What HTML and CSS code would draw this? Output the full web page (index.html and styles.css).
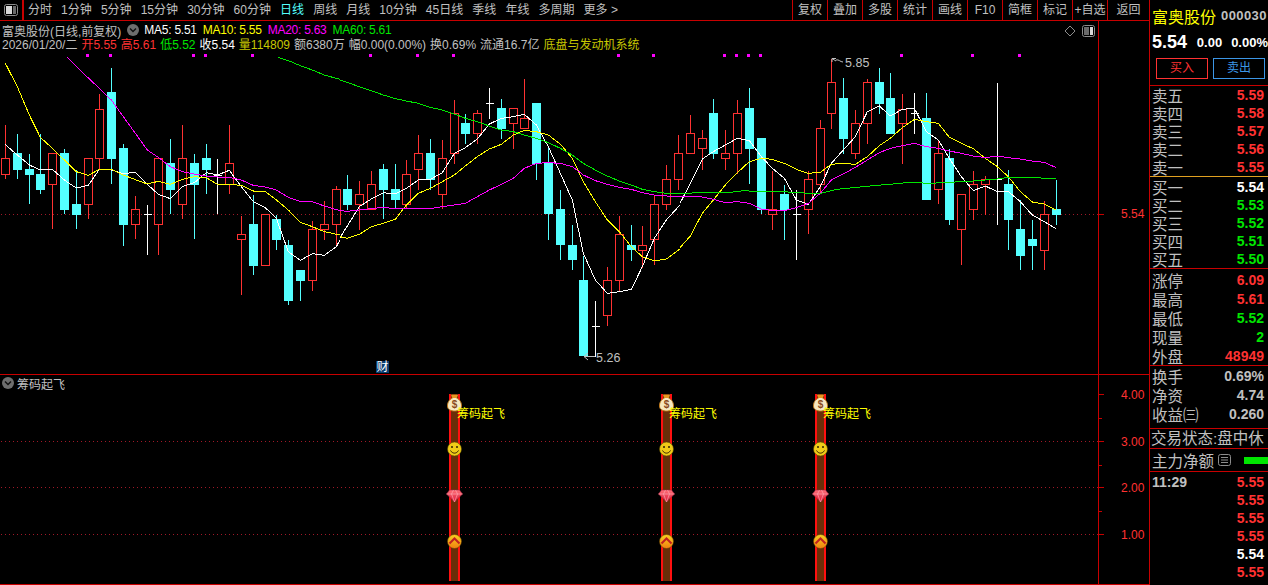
FILE: index.html
```html
<!DOCTYPE html>
<html lang="zh">
<head>
<meta charset="utf-8">
<title>富奥股份</title>
<link rel="stylesheet" href="styles.css">
</head>
<body>
<div class="app">
  <div class="left">
    <header class="toolbar">
      <div class="tb-logo">
        <svg width="16" height="14" viewBox="0 0 16 14"><rect x="1.500" y="1.500" width="13" height="11" rx="2" class="ic-line"/><rect x="3" y="3" width="6" height="8" class="ic-fill"/><rect x="10" y="3" width="3" height="8" class="ic-fill2"/></svg>
      </div>
      <nav class="periods">
        <span>分时</span><span>1分钟</span><span>5分钟</span><span>15分钟</span><span>30分钟</span><span>60分钟</span><span class="on">日线</span><span>周线</span><span>月线</span><span>10分钟</span><span>45日线</span><span>季线</span><span>年线</span><span>多周期</span><span>更多 &gt;</span>
      </nav>
      <nav class="tools">
        <span>复权</span><span>叠加</span><span>多股</span><span>统计</span><span>画线</span><span>F10</span><span>简框</span><span>标记</span><span>+自选</span><span>返回</span>
      </nav>
    </header>

    <section class="pane pane-main">
      <div class="plot">
        <svg class="canvas" width="1098" height="353" viewBox="0 21 1098 353">
          <line x1="1" y1="214.500" x2="1098" y2="214.500" class="dots"/>
          <path class="squares" d="M86 54h3v3h-3zM109 54h3v3h-3zM192 54h3v3h-3zM204 54h3v3h-3zM251 54h3v3h-3zM369 54h3v3h-3zM416 54h3v3h-3zM452 54h3v3h-3zM617 54h3v3h-3zM652 54h3v3h-3zM723 54h3v3h-3zM735 54h3v3h-3zM747 54h3v3h-3zM759 54h3v3h-3zM900 54h3v3h-3zM971 54h3v3h-3zM1018 54h3v3h-3z"/>
          <g transform="translate(0 .5)">
            <path class="c-red" d="M5.5 124V158M5.5 174V178M1.5 158h8v16h-8zM52.5 184V228M48.5 153h8v31h-8zM88.5 204V218M84.5 158h8v46h-8zM99.5 93V109M99.5 158V169M95.5 109h8v49h-8zM135.5 195V209M135.5 224V238M131.5 209h8v15h-8zM158.5 224V254M154.5 158h8v66h-8zM182.5 124V158M182.5 204V218M178.5 158h8v46h-8zM229.5 124V163M229.5 184V193M225.5 163h8v21h-8zM241.5 215V234M241.5 239V294M237.5 234h8v5h-8zM261.5 214h8v51h-8zM312.5 220V229M312.5 280V290M308.5 229h8v51h-8zM324.5 200V224M324.5 229V239M320.5 224h8v5h-8zM336.5 185V189M336.5 224V245M332.5 189h8v35h-8zM359.5 180V194M359.5 204V229M355.5 194h8v10h-8zM371.5 170V184M367.5 184h8v25h-8zM406.5 159V174M406.5 204V208M402.5 174h8v30h-8zM418.5 134V153M418.5 169V189M414.5 153h8v16h-8zM442.5 139V158M442.5 194V208M438.5 158h8v36h-8zM454.5 99V113M454.5 153V163M450.5 113h8v40h-8zM477.5 109V113M477.5 133V143M473.5 113h8v20h-8zM513.5 123V148M509.5 108h8v15h-8zM524.5 78V118M520.5 118h8v10h-8zM607.5 266V280M607.5 315V325M603.5 280h8v35h-8zM619.5 215V234M619.5 280V290M615.5 234h8v46h-8zM642.5 225V245M642.5 250V267M638.5 245h8v5h-8zM654.5 195V204M654.5 239V264M650.5 204h8v35h-8zM666.5 164V179M666.5 204V209M662.5 179h8v25h-8zM678.5 134V153M678.5 179V189M674.5 153h8v26h-8zM690.5 114V133M686.5 133h8v20h-8zM702.5 129V138M702.5 148V169M698.5 138h8v10h-8zM725.5 129V153M725.5 158V169M721.5 153h8v5h-8zM737.5 99V113M737.5 153V173M733.5 113h8v40h-8zM772.5 170V209M772.5 214V229M768.5 209h8v5h-8zM808.5 170V179M808.5 209V233M804.5 179h8v30h-8zM820.5 119V128M820.5 184V193M816.5 128h8v56h-8zM831.5 58V82M831.5 113V128M827.5 82h8v31h-8zM855.5 109V123M855.5 153V158M851.5 123h8v30h-8zM867.5 78V82M867.5 123V143M863.5 82h8v41h-8zM902.5 93V109M902.5 123V163M898.5 109h8v14h-8zM938.5 139V153M938.5 189V203M934.5 153h8v36h-8zM961.5 229V264M957.5 194h8v35h-8zM973.5 170V184M973.5 209V219M969.5 184h8v25h-8zM985.5 175V179M985.5 184V214M981.5 179h8v5h-8zM1044.5 200V214M1044.5 250V269M1040.5 214h8v36h-8z"/>
            <path class="c-cyan" d="M17.5 133V153M17.5 169V178M13.5 153h8v16h-8zM29.5 153V169M29.5 174V203M25.5 169h8v5h-8zM40.5 133V174M40.5 189V193M36.5 174h8v15h-8zM64.5 148V153M64.5 209V213M60.5 153h8v56h-8zM76.5 169V204M76.5 214V228M72.5 204h8v10h-8zM111.5 67V92M111.5 158V183M107.5 92h8v66h-8zM123.5 143V148M123.5 224V245M119.5 148h8v76h-8zM170.5 138V163M170.5 189V213M166.5 163h8v26h-8zM194.5 153V163M194.5 184V238M190.5 163h8v21h-8zM206.5 143V158M206.5 169V193M202.5 158h8v11h-8zM253.5 194V224M253.5 265V274M249.5 224h8v41h-8zM276.5 214V219M276.5 239V249M272.5 219h8v20h-8zM288.5 239V245M288.5 300V304M284.5 245h8v55h-8zM300.5 280V300M296.5 270h8v10h-8zM347.5 174V189M347.5 204V209M343.5 189h8v15h-8zM383.5 163V169M383.5 189V218M379.5 169h8v20h-8zM395.5 163V189M395.5 199V208M391.5 189h8v10h-8zM430.5 138V153M430.5 179V189M426.5 153h8v26h-8zM465.5 113V123M465.5 133V143M461.5 123h8v10h-8zM501.5 98V108M501.5 128V138M497.5 108h8v20h-8zM536.5 163V179M532.5 103h8v60h-8zM548.5 147V163M548.5 213V239M544.5 163h8v50h-8zM560.5 189V209M560.5 244V259M556.5 209h8v35h-8zM572.5 224V245M572.5 259V269M568.5 245h8v14h-8zM583.5 255V280M579.5 280h8v75h-8zM631.5 224V245M631.5 249V260M627.5 245h8v4h-8zM713.5 98V113M713.5 153V158M709.5 113h8v40h-8zM749.5 87V108M749.5 148V183M745.5 108h8v40h-8zM761.5 209V213M757.5 138h8v71h-8zM784.5 184V194M784.5 209V239M780.5 194h8v15h-8zM843.5 77V98M843.5 138V153M839.5 98h8v40h-8zM879.5 67V82M879.5 103V113M875.5 82h8v21h-8zM890.5 72V98M886.5 98h8v35h-8zM926.5 92V118M922.5 118h8v81h-8zM949.5 148V158M949.5 219V224M945.5 158h8v61h-8zM1008.5 169V184M1008.5 219V249M1004.5 184h8v35h-8zM1020.5 199V229M1020.5 255V269M1016.5 229h8v26h-8zM1032.5 219V239M1032.5 245V269M1028.5 239h8v6h-8zM1056.5 179V209M1056.5 214V224M1052.5 209h8v5h-8z"/>
            <path class="c-white" d="M147.5 204V254M143.5 214h8M217.5 158V213M213.5 175h8M489.5 87V118M485.5 103h8M595.5 300V356M591.5 326h8M796.5 189V259M792.5 214h8M914.5 92V133M910.5 113h8M997.5 82V224M993.5 179h8"/>
          </g>
          <g transform="translate(0 50) scale(.33333)">
            <polyline class="l l5" points="16,284 52,315 88,345 121,360 157,358 193,390 229,414 265,406 298,358 334,360 370,371 406,367 442,403 475,433 511,446 547,410 583,398 619,368 652,375 688,361 724,410 760,455 796,473 829,505 865,605 901,631 937,611 973,616 1009,590 1020,570"/>
            <polyline class="l l10" points="16,40 52,110 88,195 121,262 157,295 193,330 229,365 265,376 298,358 334,358 370,375 406,389 442,402 475,394 511,403 547,388 583,380 619,383 652,403 688,403 724,406 760,423 796,425 829,450 865,480 901,517 937,530 973,545 1020,555"/>
            <polyline class="l l20" points="202,22 250,70 298,115 334,150 370,200 406,250 442,300 475,322 511,350 547,365 583,372 619,378 652,381 688,382 724,390 760,406 796,411 829,420 865,442 901,454 937,455 973,468 1020,482"/>
            <polyline class="l l60" points="835,22 870,34 901,47 937,60 973,75 1020,88"/>
          </g>
          <g transform="translate(340 50) scale(.33333)">
            <polyline class="l l5" points="0,563 58,470 94,447 130,428 166,432 199,415 235,390 271,388 307,368 343,310 376,293 412,267 448,222 484,205 520,200 553,193 589,225 625,290 661,370 697,450 730,610 766,690 802,730 838,725 874,718 907,650 943,565 979,510 1020,465"/>
            <polyline class="l l10" points="0,560 22,565 58,553 94,530 130,520 166,508 199,465 235,430 271,415 307,395 343,375 376,348 412,320 448,297 484,283 520,255 553,241 589,245 625,255 661,282 697,325 730,395 766,455 802,510 838,545 874,590 907,620 943,633 979,627 1020,597"/>
            <polyline class="l l20" points="0,482 22,484 58,480 94,476 130,472 166,476 199,475 235,476 271,476 307,470 343,465 376,460 412,440 448,420 484,403 520,385 553,355 589,340 625,338 661,340 697,350 730,375 766,392 802,403 838,412 874,418 907,428 943,435 979,438 1020,440"/>
            <polyline class="l l60" points="0,90 58,110 94,122 130,135 166,146 199,153 235,160 271,172 307,180 343,192 376,205 412,215 448,228 484,240 520,245 553,255 589,265 625,278 661,295 697,315 730,340 766,360 802,378 838,393 874,405 907,418 943,425 979,430 1020,430"/>
          </g>
          <g transform="translate(680 50) scale(.33333)">
            <polyline class="l l5" points="0,460 31,400 67,327 100,305 136,285 172,265 208,272 244,320 277,355 313,385 349,450 385,463 421,410 454,340 490,300 526,260 562,185 598,168 631,198 667,178 703,175 739,245 775,270 808,325 844,380 880,422 916,408 952,425 985,425 1021,455 1057,495 1093,515 1129,537"/>
            <polyline class="l l10" points="0,593 31,558 67,490 100,450 136,405 172,368 208,335 244,325 277,328 313,340 349,358 385,370 421,367 454,343 490,340 526,343 562,320 598,287 631,265 667,233 703,208 739,215 775,220 808,262 844,280 880,296 916,325 952,350 985,380 1021,425 1057,456 1093,462 1129,480"/>
            <polyline class="l l20" points="0,440 31,441 67,441 100,448 136,458 172,455 208,460 244,478 277,481 313,482 349,473 385,460 421,430 454,390 490,372 526,352 562,330 598,308 631,295 667,287 703,280 739,290 775,295 808,303 844,310 880,318 916,323 952,318 985,323 1021,327 1057,333 1093,337 1129,353"/>
            <polyline class="l l60" points="0,432 50,428 100,428 150,427 190,422 240,425 300,425 349,427 385,430 421,430 470,418 530,412 580,407 640,402 690,397 750,400 808,397 880,393 952,387 985,382 1057,383 1129,386"/>
          </g>
          <path class="mark" d="M832 62V58.500L836 61M832 58.500L836 58.500M836 60C839 59 840 62 843 62"/>
          <text x="845" y="67" class="peak">5.85</text>
          <path class="mark" d="M595 356.500H584M584 356.500L588 353M584 356.500L588 360"/>
          <text x="596" y="362" class="peak">5.26</text>
          <path class="ic-diamond" d="M1070 26L1075 31L1070 36L1065 31Z"/>
          <rect x="1082.500" y="25.500" width="12" height="11" rx="2" class="ic-line"/>
          <rect x="1084" y="27" width="5" height="8" class="ic-fill2"/>
          <rect x="1090" y="27" width="3" height="8" class="ic-fill"/>
        </svg>
        <div class="chart-info">
          <div class="info-1">
            <span class="name">富奥股份(日线,前复权)</span>
            <svg class="chev" width="12" height="12" viewBox="0 0 12 12"><circle cx="6" cy="6" r="6" class="chev-bg"/><path d="M3 4.500L6 7.500L9 4.500" class="chev-mark"/></svg>
            <span class="ma w">MA5: 5.51</span><span class="ma y">MA10: 5.55</span><span class="ma m">MA20: 5.63</span><span class="ma g">MA60: 5.61</span>
          </div>
          <div class="info-2">
            <span>2026/01/20/二</span>
            <span class="r">开5.55</span>
            <span class="r">高5.61</span>
            <span class="g">低5.52</span>
            <span class="w">收5.54</span>
            <span class="o">量114809</span>
            <span>额6380万</span>
            <span>幅0.00(0.00%)</span>
            <span>换0.69%</span>
            <span>流通16.7亿</span>
            <span class="o">底盘与发动机系统</span>
          </div>
        </div>
        <div class="cai">财</div>
      </div>
      <div class="axis">
        <svg width="50" height="353" viewBox="1099 21 50 353">
          <path class="tick" d="M1099 214.500H1104"/>
          <text x="1121" y="218" class="axis-t">5.54</text>
        </svg>
      </div>
    </section>

    <section class="pane pane-sub">
      <div class="plot">
        <svg class="canvas" width="1098" height="209" viewBox="0 375 1098 209">
          <defs>
            <linearGradient id="og" x1="0" y1="0" x2="0" y2="1"><stop offset="0" stop-color="#f8d020"/><stop offset="1" stop-color="#f08010"/></linearGradient>
            <linearGradient id="rb" x1="0" y1="0" x2="0" y2="1"><stop offset="0" stop-color="#ff7078"/><stop offset="1" stop-color="#d81838"/></linearGradient>
            <symbol id="bag" overflow="visible"><path d="M-3-9H3L2-6C6-4 7-1 7 2C7 6 3 7 0 7C-3 7-7 6-7 2C-7-1-6-4-2-6Z" fill="#f6e8c0" stroke="#c07818"/><path d="M-3-9H3L2-6H-2Z" fill="#e89820"/></symbol>
            <symbol id="smile" overflow="visible"><circle r="7" fill="#f0cc18" stroke="#5a4a00" stroke-width=".6"/><circle cx="-2.500" cy="-2" r="1" fill="#302000"/><circle cx="2.500" cy="-2" r="1" fill="#302000"/><path d="M-4 1.500C-2 5 2 5 4 1.500" fill="none" stroke="#302000" stroke-width="1"/></symbol>
            <symbol id="ruby" overflow="visible"><path d="M-5-6H5L8-2L0 6L-8-2Z" fill="url(#rb)" stroke="#a02040" stroke-width=".6"/><path d="M-8-2H8M-3-2L0 6L3-2M-3-2L-1-6M3-2L1-6" fill="none" stroke="#ffb0b8" stroke-width=".6"/></symbol>
            <symbol id="up" overflow="visible"><circle r="7" fill="url(#og)" stroke="#5a3a00" stroke-width=".5"/><path d="M-5 2L0-3L5 2" fill="none" stroke="#c02020" stroke-width="2"/></symbol>
          </defs>
          <path class="dots" d="M1 441.500H1098M1 487.500H1098M1 534.500H1098"/>
          <g class="tower">
            <rect x="449" y="394" width="11" height="187" class="t-red"/><rect x="451" y="394" width="7" height="187" class="t-brown"/>
            <use href="#bag" x="454.500" y="404"/><text x="454.500" y="408" class="dollar">$</text>
            <use href="#smile" x="454.500" y="449"/><use href="#ruby" x="454.500" y="496"/><use href="#up" x="454.500" y="541.500"/>
            <text x="457" y="418" class="sig">筹码起飞</text>
          </g>
          <g class="tower">
            <rect x="661" y="394" width="11" height="187" class="t-red"/><rect x="663" y="394" width="7" height="187" class="t-brown"/>
            <use href="#bag" x="666.500" y="404"/><text x="666.500" y="408" class="dollar">$</text>
            <use href="#smile" x="666.500" y="449"/><use href="#ruby" x="666.500" y="496"/><use href="#up" x="666.500" y="541.500"/>
            <text x="669" y="418" class="sig">筹码起飞</text>
          </g>
          <g class="tower">
            <rect x="815" y="394" width="11" height="187" class="t-red"/><rect x="817" y="394" width="7" height="187" class="t-brown"/>
            <use href="#bag" x="820.500" y="404"/><text x="820.500" y="408" class="dollar">$</text>
            <use href="#smile" x="820.500" y="449"/><use href="#ruby" x="820.500" y="496"/><use href="#up" x="820.500" y="541.500"/>
            <text x="823" y="418" class="sig">筹码起飞</text>
          </g>
        </svg>
        <div class="sub-title">
          <svg class="chev" width="12" height="12" viewBox="0 0 12 12"><circle cx="6" cy="6" r="6" class="chev-bg"/><path d="M3 4.500L6 7.500L9 4.500" class="chev-mark"/></svg>
          <span>筹码起飞</span>
        </div>
      </div>
      <div class="axis">
        <svg width="50" height="209" viewBox="1099 375 50 209">
          <path class="tick" d="M1099 394.500H1104M1099 441.500H1104M1099 487.500H1104M1099 534.500H1104M1099 418.500H1102M1099 465.500H1102M1099 511.500H1102"/>
          <text x="1121" y="399" class="axis-t">4.00</text>
          <text x="1121" y="446" class="axis-t">3.00</text>
          <text x="1121" y="492" class="axis-t">2.00</text>
          <text x="1121" y="539" class="axis-t">1.00</text>
        </svg>
      </div>
    </section>
  </div>

  <aside class="panel">
    <div class="head">
      <div class="title"><span class="t-name">富奥股份</span><span class="t-code">000030</span></div>
      <div class="quote"><span class="q-big">5.54</span><span class="q-small q-a">0.00</span><span class="q-small q-b">0.00%</span></div>
      <div class="trade"><span class="btn buy">买入</span><span class="btn sell">卖出</span></div>
    </div>
    <div class="book sell-book">
      <div class="row"><span>卖五</span><b class="r">5.59</b></div>
      <div class="row"><span>卖四</span><b class="r">5.58</b></div>
      <div class="row"><span>卖三</span><b class="r">5.57</b></div>
      <div class="row"><span>卖二</span><b class="r">5.56</b></div>
      <div class="row"><span>卖一</span><b class="r">5.55</b></div>
    </div>
    <div class="book buy-book">
      <div class="row"><span>买一</span><b class="w">5.54</b></div>
      <div class="row"><span>买二</span><b class="g">5.53</b></div>
      <div class="row"><span>买三</span><b class="g">5.52</b></div>
      <div class="row"><span>买四</span><b class="g">5.51</b></div>
      <div class="row"><span>买五</span><b class="g">5.50</b></div>
    </div>
    <div class="book stats">
      <div class="row tall"><span>涨停</span><b class="r">6.09</b></div>
      <div class="row tall"><span>最高</span><b class="r">5.61</b></div>
      <div class="row tall"><span>最低</span><b class="g">5.52</b></div>
      <div class="row tall"><span>现量</span><b class="g">2</b></div>
      <div class="row tall"><span>外盘</span><b class="r">48949</b></div>
    </div>
    <div class="book fund">
      <div class="row tall"><span>换手</span><b class="n">0.69%</b></div>
      <div class="row tall"><span>净资</span><b class="n">4.74</b></div>
      <div class="row tall"><span>收益㈢</span><b class="n">0.260</b></div>
    </div>
    <div class="state">交易状态:盘中休</div>
    <div class="flow">
      <span class="flow-name">主力净额</span>
      <svg class="flow-ic" width="13" height="12" viewBox="0 0 13 12"><rect x=".5" y=".5" width="12" height="11" rx="2" class="ic-line"/><path d="M3 3.500H10M3 6H10M3 8.500H10" class="ic-rows"/></svg>
      <i class="flow-bar"></i>
    </div>
    <div class="ticks">
      <div class="row"><b class="n">11:29</b><b class="r">5.55</b></div>
      <div class="row end"><b class="r">5.55</b></div>
      <div class="row end"><b class="r">5.55</b></div>
      <div class="row end"><b class="r">5.55</b></div>
      <div class="row end"><b class="w">5.54</b></div>
      <div class="row end"><b class="r">5.55</b></div>
    </div>
  </aside>
</div>
</body>
</html>
```
FILE: styles.css
```css
* { box-sizing: border-box; }
html, body { margin: 0; padding: 0; background: #000; overflow: hidden; }
body { font-family: "Liberation Sans", "Noto Sans CJK SC", sans-serif; font-size: 12px; color: #c0c0c0; }
i { font-style: normal; }
svg { display: block; }

.app { display: flex; width: 1268px; height: 585px; }
.left { width: 1149px; display: flex; flex-direction: column; }

.r { color: #ff3232; }
.g { color: #00e600; }
.w { color: #fff; }
.y { color: #ffff00; }
.m { color: #ff00ff; }
.o { color: #c8c800; }
.n { color: #c0c0c0; }

.toolbar { height: 21px; display: flex; border-bottom: 1px solid #c80000; flex: none; }
.tb-logo { width: 24px; border-right: 2px solid #c80000; display: flex; align-items: center; justify-content: center; }
.periods { display: flex; gap: 9.100px; padding-left: 4px; align-items: center; line-height: 20px; }
.periods .on { color: #54ffff; }
.tools { margin-left: auto; display: flex; }
.tools span { width: 35px; text-align: center; line-height: 20px; border-left: 1px solid #c80000; }
.tools span:last-child { width: 42px; }

.pane { display: flex; flex: none; }
.pane-main { height: 354px; border-bottom: 1px solid #c80000; }
.pane-sub { height: 210px; border-bottom: 1px solid #c80000; }
.plot { position: relative; width: 1099px; border-right: 1px solid #c80000; }
.axis { width: 50px; }
.canvas { position: absolute; left: 0; top: 0; }

.chart-info { position: relative; padding: 1px 0 0 2px; }
.info-1 { display: flex; align-items: center; height: 16px; }
.chev { flex: none; margin-left: 6px; }
.chev-bg { fill: #6e6e6e; }
.chev-mark { fill: none; stroke: #111; stroke-width: 1.500; }
.ma { letter-spacing: -.25px; margin-left: 6px; }
.info-1 .w { margin-left: 5px; }
.info-2 { display: flex; gap: 4px; height: 14px; line-height: 14px; white-space: nowrap; }

.dots { stroke: #a01828; stroke-width: 1; stroke-dasharray: 1 3; fill: none; shape-rendering: crispEdges; }
.squares { fill: #ff00ff; }
.c-red { fill: none; stroke: #ff3232; stroke-width: 1; shape-rendering: crispEdges; }
.c-cyan { fill: #54ffff; stroke: #54ffff; stroke-width: 1; shape-rendering: crispEdges; }
.c-white { fill: none; stroke: #fff; stroke-width: 1; shape-rendering: crispEdges; }
.l { fill: none; stroke-width: 1; vector-effect: non-scaling-stroke; shape-rendering: crispEdges; }
.l5 { stroke: #fff; }
.l10 { stroke: #ffff00; }
.l20 { stroke: #ff00ff; }
.l60 { stroke: #00e600; }
.mark { fill: none; stroke: #c0c0c0; stroke-width: 1; }
.peak { fill: #c0c0c0; font-size: 12.500px; }
.ic-diamond { fill: none; stroke: #8c8c8c; stroke-width: 1; }
.ic-line { fill: none; stroke: #8c8c8c; stroke-width: 1; }
.ic-fill { fill: #d8d8d8; }
.ic-fill2 { fill: #6a6a6a; }
.ic-rows { fill: none; stroke: #8c8c8c; stroke-width: 1; }

.cai { position: absolute; left: 376px; top: 340px; width: 13px; height: 12px; background: #0a3c6e; color: #fff; font-size: 12px; line-height: 12px; text-align: center; }

.tick { stroke: #c80000; stroke-width: 1; fill: none; }
.axis-t { fill: #ff3232; font-size: 12px; }

.sub-title { position: absolute; left: 2px; top: 1px; display: flex; align-items: center; height: 14px; gap: 3px; }
.sub-title .chev { margin-left: 0; }
.t-red { fill: #ff1010; }
.t-brown { fill: #6a2e08; }
.dollar { fill: #8a4a20; font-size: 10px; font-weight: 700; text-anchor: middle; }
.sig { fill: #ffff00; font-size: 12px; }

.panel { width: 119px; border-left: 1px solid #c80000; overflow: hidden; flex: none; }
.head { height: 86px; padding: 5px 0 0 2px; border-bottom: 1px solid #c80000; }
.title { display: flex; align-items: center; height: 21px; white-space: nowrap; gap: 5px; }
.t-name { color: #ffff00; font-size: 16px; }
.t-code { font-size: 13px; font-weight: 700; letter-spacing: .4px; }
.quote { display: flex; align-items: center; height: 20px; margin-top: 6px; white-space: nowrap; font-weight: 700; color: #fff; }
.q-big { font-size: 18px; width: 47px; }
.q-small { font-size: 13px; }
.q-a { width: 36px; }
.trade { display: flex; gap: 5px; margin: 6px 0 0 4px; }
.btn { width: 52px; height: 21px; line-height: 18px; text-align: center; border: 1px solid; font-size: 12px; }
.buy { color: #ff3232; border-color: #ff3232; }
.sell { color: #3c96e6; border-color: #3c96e6; }

.book { padding: 0 4px 0 2px; }
.row { display: flex; justify-content: space-between; align-items: center; height: 18px; font-size: 15.500px; white-space: nowrap; }
.row.tall { height: 19px; }
.row.end { justify-content: flex-end; }
.row b { font-size: 14px; font-weight: 700; }
.sell-book { height: 91px; border-bottom: 1px solid #e0a020; }
.buy-book { height: 92px; padding-top: 1px; border-bottom: 1px solid #c80000; }
.stats { height: 97px; padding-top: 1px; border-bottom: 1px solid #c80000; }
.fund { height: 63px; border-bottom: 1px solid #c80000; }
.state { height: 20px; line-height: 20px; font-size: 15.500px; padding-left: 1px; border-bottom: 1px solid #c80000; white-space: nowrap; }
.flow { height: 23px; display: flex; align-items: center; padding-left: 2px; font-size: 15.500px; border-bottom: 1px solid #c80000; }
.flow-name { flex: none; white-space: nowrap; }
.flow-ic { flex: none; margin-left: 4px; }
.flow-bar { width: 30px; height: 7px; background: #00e600; margin-left: 13px; flex: none; }
.ticks { padding: 1px 4px 0 2px; }
```
